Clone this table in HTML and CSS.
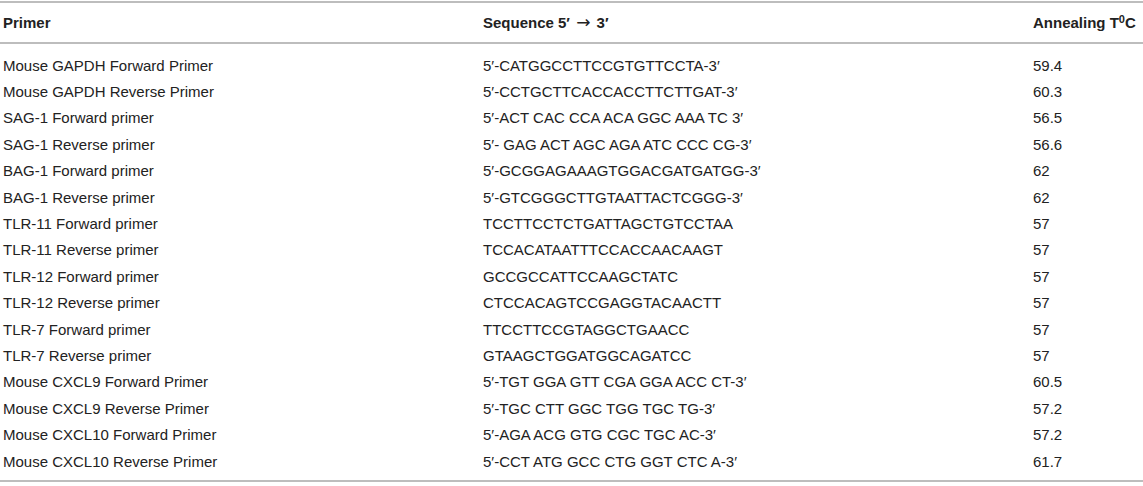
FILE: index.html
```html
<!DOCTYPE html>
<html>
<head>
<meta charset="utf-8">
<link rel="stylesheet" href="styles.css">
</head>
<body>
<table class="primers">
  <colgroup>
    <col class="c-primer">
    <col class="c-seq">
    <col class="c-temp">
  </colgroup>
  <thead>
    <tr><th>Primer</th><th>Sequence 5′ <span class="arrow">→</span> 3′</th><th>Annealing T<sup>0</sup>C</th></tr>
  </thead>
  <tbody>
    <tr class="first"><td>Mouse GAPDH Forward Primer</td><td>5′-CATGGCCTTCCGTGTTCCTA-3′</td><td>59.4</td></tr>
    <tr><td>Mouse GAPDH Reverse Primer</td><td>5′-CCTGCTTCACCACCTTCTTGAT-3′</td><td>60.3</td></tr>
    <tr><td>SAG-1 Forward primer</td><td>5′-ACT CAC CCA ACA GGC AAA TC 3′</td><td>56.5</td></tr>
    <tr><td>SAG-1 Reverse primer</td><td>5′- GAG ACT AGC AGA ATC CCC CG-3′</td><td>56.6</td></tr>
    <tr><td>BAG-1 Forward primer</td><td>5′-GCGGAGAAAGTGGACGATGATGG-3′</td><td>62</td></tr>
    <tr><td>BAG-1 Reverse primer</td><td>5′-GTCGGGCTTGTAATTACTCGGG-3′</td><td>62</td></tr>
    <tr><td>TLR-11 Forward primer</td><td>TCCTTCCTCTGATTAGCTGTCCTAA</td><td>57</td></tr>
    <tr><td>TLR-11 Reverse primer</td><td>TCCACATAATTTCCACCAACAAGT</td><td>57</td></tr>
    <tr><td>TLR-12 Forward primer</td><td>GCCGCCATTCCAAGCTATC</td><td>57</td></tr>
    <tr><td>TLR-12 Reverse primer</td><td>CTCCACAGTCCGAGGTACAACTT</td><td>57</td></tr>
    <tr><td>TLR-7 Forward primer</td><td>TTCCTTCCGTAGGCTGAACC</td><td>57</td></tr>
    <tr><td>TLR-7 Reverse primer</td><td>GTAAGCTGGATGGCAGATCC</td><td>57</td></tr>
    <tr><td>Mouse CXCL9 Forward Primer</td><td>5′-TGT GGA GTT CGA GGA ACC CT-3′</td><td>60.5</td></tr>
    <tr><td>Mouse CXCL9 Reverse Primer</td><td>5′-TGC CTT GGC TGG TGC TG-3′</td><td>57.2</td></tr>
    <tr><td>Mouse CXCL10 Forward Primer</td><td>5′-AGA ACG GTG CGC TGC AC-3′</td><td>57.2</td></tr>
    <tr class="last"><td>Mouse CXCL10 Reverse Primer</td><td>5′-CCT ATG GCC CTG GGT CTC A-3′</td><td>61.7</td></tr>
  </tbody>
</table>
</body>
</html>
```
FILE: styles.css
```css
html, body {
  margin: 0;
  padding: 0;
  background: #ffffff;
}
body {
  padding-top: 1px;
}
.primers {
  width: 1143px;
  border-collapse: collapse;
  table-layout: fixed;
  font-family: "Liberation Sans", Arial, sans-serif;
  font-size: 15px;
  color: #222222;
}
.c-primer { width: 480px; }
.c-seq { width: 550px; }
.c-temp { width: 113px; }

.primers thead tr {
  border-top: 2px solid #bdbdbd;
  border-bottom: 2px solid #bdbdbd;
}
.primers th {
  text-align: left;
  font-weight: bold;
  height: 39px;
  padding: 0 0 0 3px;
  vertical-align: middle;
  white-space: nowrap;
}
.primers th .arrow {
  font-family: "DejaVu Sans", sans-serif;
  font-weight: normal;
  font-size: 17px;
  line-height: 0;
  margin: 0 2px;
}
.primers th sup {
  font-size: 11px;
  line-height: 0;
  vertical-align: 5px;
}
.primers td {
  height: 26.4px;
  padding: 0 0 0 3px;
  vertical-align: middle;
  white-space: nowrap;
  line-height: 17px;
}
.primers tbody tr.first td {
  padding-top: 8px;
}
.primers tbody tr.last {
  border-bottom: 2px solid #bdbdbd;
}
.primers tbody tr.last td {
  padding-bottom: 6px;
}
```
